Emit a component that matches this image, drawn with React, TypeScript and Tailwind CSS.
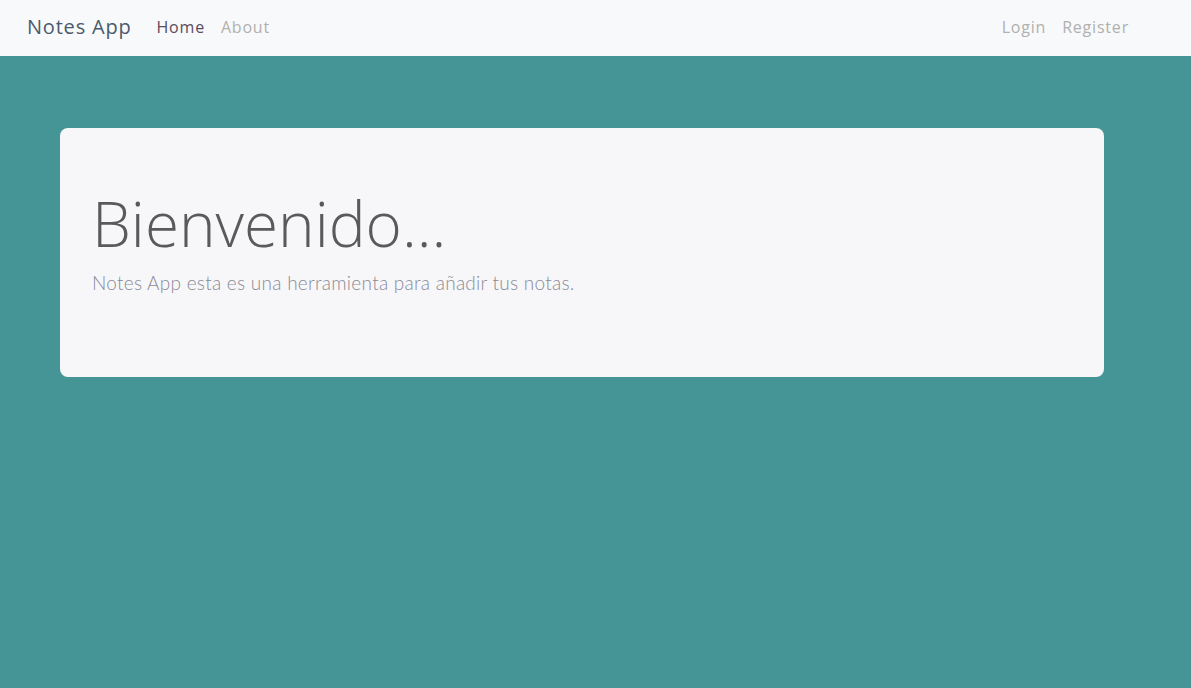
export default function App() {
  return (
    <div className="min-h-[688px] bg-[#469596]" style={{ fontFamily: '"Open Sans", sans-serif' }}>
      <nav className="h-14 bg-[#f8f9fa] flex items-center px-[27px] pb-[2px]">
        <a className="text-[20px] text-[#4b5a6b] mr-[25px] tracking-[0.8px]">Notes App</a>
        <div className="flex gap-4 text-[16px] tracking-[0.8px]">
          <a className="text-[#5a4a5e]">Home</a>
          <a className="text-[#b0b0b0]">About</a>
        </div>
        <div className="ml-auto flex gap-4 text-[16px] tracking-[0.8px] mr-[35px]">
          <a className="text-[#b0b0b0]">Login</a>
          <a className="text-[#b0b0b0]">Register</a>
        </div>
      </nav>
      <main className="px-[60px] pt-[72px] pr-[87px]">
        <div className="bg-[#f7f7f9] rounded-lg h-[249px] px-8 pt-[58px]">
          <h1 className="text-[62px] font-light leading-[1.2] text-[#5a5a5a]">Bienvenido...</h1>
          <p className="mt-[9px] text-[19px] font-light tracking-[0.27px] text-[#8a8a96]" style={{ fontFamily: 'Lato, sans-serif' }}>
            Notes App esta es una herramienta para añadir tus notas.
          </p>
        </div>
      </main>
    </div>
  )
}
